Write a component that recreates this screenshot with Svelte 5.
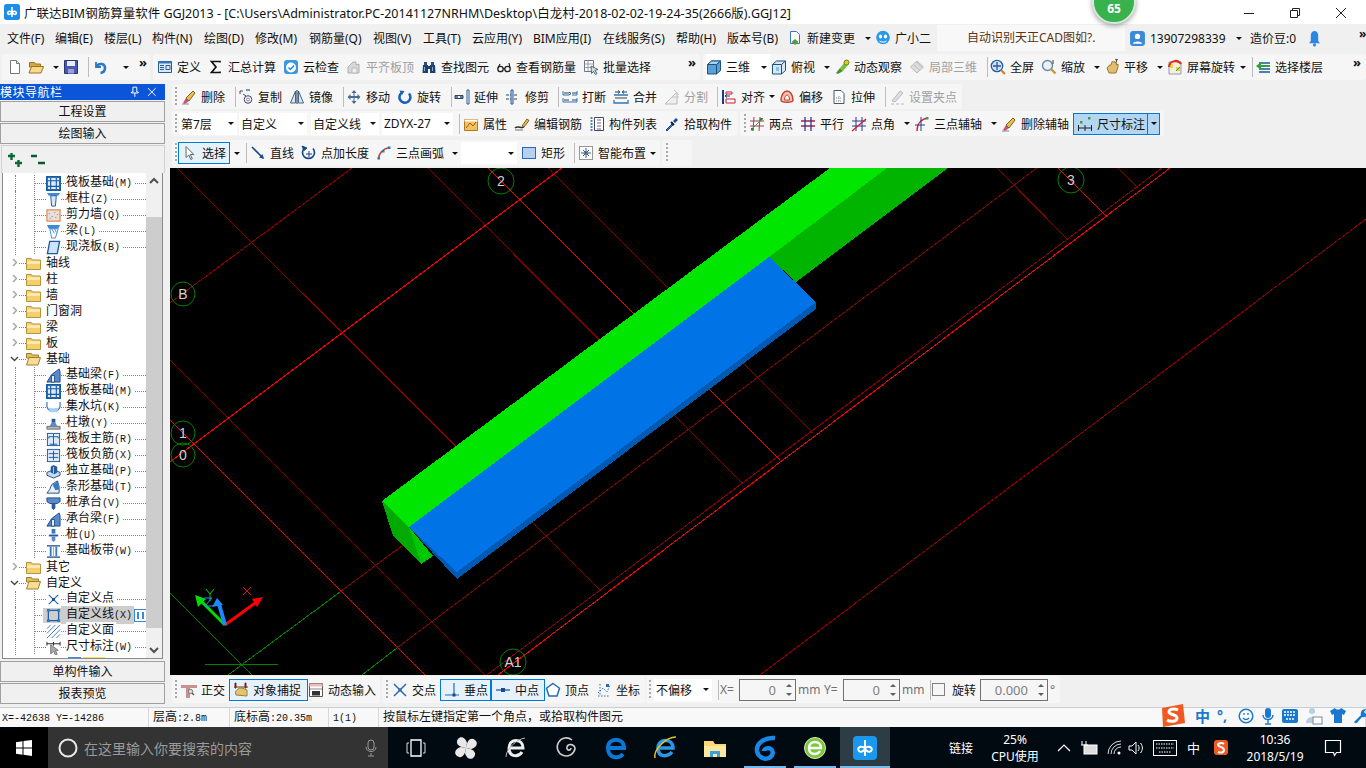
<script>
  const I = {
    doc: `<path d="M3.5 1.5h6l3 3v10h-9z" fill="#fff" stroke="#777"/><path d="M9.5 1.5v3h3" fill="#ddd" stroke="#777"/>`,
    folder: `<path d="M1.5 3.5h5l1 1.5h5v3h-11z" fill="#d8a840" stroke="#9a7420"/><path d="M1 14l2.5-6.5h12L13 14z" fill="#f6d98c" stroke="#9a7420"/>`,
    save: `<path d="M1.5 1.5h13v13h-13z" fill="#4a58b0" stroke="#2a3478"/><path d="M4 2h8v5H4z" fill="#e8ecf8"/><path d="M5 10h6v4.500H5z" fill="#9aa4d8"/>`,
    undo: `<path d="M4 3v5h5" fill="none" stroke="#2a78c8" stroke-width="1.800"/><path d="M4.500 7.500C7 3.500 13 4.500 13 9c0 3-2 4.500-4.500 5" fill="none" stroke="#2a78c8" stroke-width="2.600"/>`,
    def: `<path d="M1.500 2.500h13v11h-13z" fill="#dbe8f6" stroke="#2a5a9a"/><path d="M1.500 2.500h13v2h-13z" fill="#3a78c0"/><path d="M3 6.500h4M3 8.500h4M3 10.500h4M9 6.500h4v4H9z" fill="none" stroke="#2a5a9a"/>`,
    sigma: `<path d="M12 3.500V2.500H3.500L8 8l-4.500 5.500H12v-1" fill="none" stroke="#111" stroke-width="1.700"/>`,
    cloud: `<rect x="1" y="1" width="14" height="14" rx="3" fill="#3a98e0"/><circle cx="8" cy="8.500" r="5" fill="#fff"/><path d="M5.500 8.500l2 2 3.500-4" fill="none" stroke="#2a88d0" stroke-width="1.500"/>`,
    level: `<path d="M2 14V8l5-5h3v3l3-1v9z" fill="#d8d8d8" stroke="#b0b0b0"/><path d="M6 9h5v5H6z" fill="#efefef" stroke="#bbb"/>`,
    binoc: `<path d="M3 3h3v3H3zM10 3h3v3h-3z" fill="#30507c"/><path d="M2 6h5v8H1.500zM9 6h5l.5 8H9zM7 7h2v3H7z" fill="#20406c"/><path d="M3 8h1v4H3zM11 8h1v4h-1z" fill="#8ab0d8"/>`,
    specs: `<circle cx="4.500" cy="10" r="2.700" fill="none" stroke="#222" stroke-width="1.300"/><circle cx="11.500" cy="10" r="2.700" fill="none" stroke="#222" stroke-width="1.300"/><path d="M7 9.500h2M2 9l2-4M14 9l-1-5" fill="none" stroke="#222" stroke-width="1.200"/>`,
    batch: `<path d="M1.500 1.500h9v11h-9z" fill="#fff" stroke="#678"/><path d="M1.500 5h9M1.500 8.500h9M5 1.500v11" stroke="#99a"/><path d="M8 7l7 3.500-3 1 2 3-1.500 1-2-3-2 2z" fill="#cdd" stroke="#567"/>`,
    cube: `<path d="M1.500 5.500l4-3.500h9v9.500l-4 3.500h-9z" fill="#5aa0d8" stroke="#20507c"/><path d="M1.500 5.500h9v9.500M10.500 5.500l4-3.500" fill="none" stroke="#20507c"/><path d="M1.500 5.500l4-3.500h9l-4 3.500z" fill="#a8d4f4" stroke="#20507c"/>`,
    cubeo: `<path d="M1.500 5.500l4-3.500h9v9.500l-4 3.500h-9z" fill="#d4e8f8" stroke="#20507c"/><path d="M1.500 5.500h9v9.500M10.500 5.500l4-3.500" fill="none" stroke="#20507c"/><path d="M5 8h3v4H5z" fill="#8cc0e8"/>`,
    orbit: `<path d="M2 14l4-5 3 3-5 3z" fill="#4a9030"/><path d="M6 9l5-6 3 3-5 6z" fill="#7ac040"/><circle cx="12.500" cy="3.500" r="2.500" fill="#e0d020" stroke="#6a8020"/>`,
    local: `<path d="M1.500 8L8 2l6.500 6L8 14z" fill="#ddd" stroke="#bbb"/><path d="M4.500 5.500l6.500 6M7.500 3l6 6" stroke="#bbb"/>`,
    full: `<circle cx="7" cy="7" r="5.700" fill="#cfe2f6" stroke="#2a5a9a" stroke-width="1.300"/><path d="M7 3v8M3 7h8" stroke="#2a5a9a" stroke-width="1.300"/><path d="M11 11l4 4" stroke="#c08030" stroke-width="2"/>`,
    zoom: `<circle cx="6.500" cy="6.500" r="5" fill="#e8f0f8" stroke="#6a88a8" stroke-width="1.400"/><path d="M10 10l4.500 4.500" stroke="#c09a30" stroke-width="2.400"/><path d="M12 1v4" stroke="#444"/>`,
    pan: `<path d="M3 9l2 5h7l2-6V5l-1.500 1V3.500L11 4V2.500L9.500 3 8 2.500 7 6 5.500 6z" fill="#e2bc70" stroke="#9a7a30"/><path d="M11 1l1.500-1 1.500 1M12.500 0v3" stroke="#456" fill="none"/>`,
    rot: `<path d="M2 3h12v12H2z" fill="#f0f0e0" stroke="#99a"/><path d="M3 5h3v4H3zM9 8h4v4H9z" fill="#e8d050"/><path d="M9 12l4-4" stroke="#40a040"/><path d="M2 8a6.500 6.500 0 0 1 12-3" fill="none" stroke="#e03020" stroke-width="2"/>`,
    floors: `<path d="M4 4h11M4 7h11M4 10h11M4 13h11" stroke="#1a5a9a" stroke-width="1.600"/><path d="M1 7l5-4v3h9v2H6v3z" fill="#30a040"/>`,
    erase: `<path d="M2 14l3-5 3 3-4 3z" fill="#d04a90"/><path d="M5 9l7-7 2 2-6 8z" fill="#e8c050" stroke="#806020"/><path d="M1 15h7" stroke="#888"/>`,
    copy: `<circle cx="10" cy="10.500" r="3.800" fill="none" stroke="#446" /><circle cx="10" cy="10.500" r="1.500" fill="none" stroke="#88a"/><path d="M2 2h3M2 2v3M5 5l3 2" stroke="#446" fill="none"/><path d="M8 1h4" stroke="#3a78c0" stroke-width="1.500"/>`,
    mirror: `<path d="M1.500 14L6.500 2v12zM14.500 14L9.500 2v12z" fill="#dce8f4" stroke="#446688"/><path d="M8 1v14" stroke="#223"/>`,
    move: `<path d="M8 1l2.500 3h-2v3h3V5l3 3-3 3V9h-3v3h2L8 15l-2.500-3h2V9h-3v2l-3-3 3-3v2h3V4h-2z" fill="#4a6a90"/>`,
    rotate: `<path d="M12 4.500A5.500 5.500 0 1 1 5 3.500" fill="none" stroke="#1a60b8" stroke-width="2.600"/><path d="M2.500 1.500l5 .500-2.500 4z" fill="#1a60b8"/>`,
    extend: `<path d="M1 8h3M6 8h3" stroke="#2a5a9a" stroke-width="1.500"/><path d="M1 6.500h8v3H1z" fill="none" stroke="#345"/><path d="M13 1v14h2V1z" fill="#fff" stroke="#2a5a9a"/>`,
    trim: `<path d="M1 6h12M1 10h12" stroke="#345" stroke-dasharray="3 1"/><path d="M6 1v14h2V1z" fill="#cde" stroke="#2a5a9a"/>`,
    break: `<path d="M2 4h5M10 4h5M2 11h5M10 11h5" stroke="#345"/><path d="M1 2v4h6M15 2v4H10M1 9v4h14V9" fill="none" stroke="#2a78c0"/><path d="M7 3l2 1.500L7 6" fill="none" stroke="#345"/>`,
    merge: `<path d="M1 11v3h14v-3M1 6h14" fill="none" stroke="#2a78c0" stroke-width="1.300"/><path d="M2 3h4M10 3h4M5 1.500L7 3 5 4.500M11 1.500L9 3l2 1.500" fill="none" stroke="#345"/><path d="M2 9h12" stroke="#345"/>`,
    split: `<path d="M1 15L13 3v12z" fill="#eee" stroke="#bbb"/><path d="M8 8h7M10 1l5 5" stroke="#c4c4c4"/>`,
    alignl: `<path d="M2 1v14" stroke="#1a3a8a" stroke-width="2"/><path d="M5 3h6v2H5zM5 10h9v4H5z" fill="#fff" stroke="#c02030"/><path d="M9 7H4M6 5.500L4 7l2 1.500" fill="none" stroke="#1a3a8a"/>`,
    offset: `<path d="M2 11c0-5 3-9 6-9s6 4 6 9c0 3-12 3-12 0z" fill="#f4c0b0" stroke="#c04030" stroke-width="1.500"/><path d="M5.500 11c0-3 1.500-5 2.500-5s2.500 2 2.500 5z" fill="#fff" stroke="#c04030"/>`,
    stretch: `<path d="M3 1.500h7l3 3v10H3z" fill="#fff" stroke="#456"/><path d="M5 9h6M5 12h6M8 7v6" stroke="#789" stroke-dasharray="1 1"/>`,
    gripset: `<path d="M3 12L11 2l3 2-8 9z" fill="#ddd" stroke="#bbb"/><path d="M2 15h3M7 15h3M12 15h3" stroke="#bbb"/>`,
    attr: `<path d="M1.500 3.500h13v11h-13z" fill="#f6c060" stroke="#b07820"/><path d="M3 12l4-5 3 3 3-4" fill="none" stroke="#906020"/><path d="M1.500 3.500h13v2h-13z" fill="#fff"/>`,
    edit: `<path d="M1 12c3-3 6 1 9-1" fill="none" stroke="#333" stroke-width="1.500"/><path d="M8 10l5-7 2 1.500L10 11z" fill="#e8c050" stroke="#806020"/><path d="M1 14h8" stroke="#777"/>`,
    list: `<path d="M5.500 1.500h9v13h-9z" fill="#fff" stroke="#446"/><path d="M8 4h4M8 7h4M8 10h4M8 13h4" stroke="#668"/><path d="M1.500 2h2M1.500 5h2M1.500 8h2M1.500 11h2M1.500 14h2" stroke="#268" stroke-width="1.500"/>`,
    pick: `<path d="M2 14l1 1 6-6-1-1z" fill="#4a78c8" stroke="#1a4898"/><path d="M7 6l3 3" stroke="#123" stroke-width="2"/><path d="M9 5l3-3 2 2-3 3z" fill="#1a4898"/>`,
    twopt: `<path d="M1 5h14M1 10h14M5 1l-1 14M11 1l-1 14" stroke="#a04060"/><path d="M2 14L14 2" stroke="#40a040"/><rect x="2" y="12" width="2.500" height="2.500" fill="#308030"/><rect x="11" y="2" width="2.500" height="2.500" fill="#308030"/>`,
    par: `<path d="M1 5h14M1 10h14" stroke="#a02050" stroke-width="1.300"/><path d="M5 1v14M11 1v14" stroke="#2a3a90" stroke-width="1.300"/>`,
    ang: `<path d="M1 5h14M1 10h14M5 1v14M11 1v14" stroke="#2a3a90"/><path d="M1 15L15 3" stroke="#d02030" stroke-width="1.300"/>`,
    arc3: `<path d="M3 15C3 8 7 3 14 2" fill="none" stroke="#d02030" stroke-width="1.400"/><path d="M7 1v14M1 9h10" stroke="#2a3a90"/><rect x="12" y="1" width="2.500" height="2.500" fill="#40a040"/>`,
    dim: `<path d="M1.500 9v6M8 9v6M14.500 9v6M1.500 12h13" stroke="#222"/><rect x="3" y="5" width="2.500" height="2.500" fill="#40a040"/><rect x="11" y="1" width="2.500" height="2.500" fill="#40a040"/>`,
    sel: `<path d="M4 1.500v11l2.800-2.500 2 4.500 1.500-.7-2-4.300h3.500z" fill="#fff" stroke="#666"/>`,
    line: `<path d="M2 2l11 11" stroke="#1a4a8a" stroke-width="1.600"/><path d="M14 14l-5-1.500 3.500-3.500z" fill="#1a4a8a"/>`,
    addlen: `<path d="M3 3.500a6 6 0 1 0 9 0" fill="none" stroke="#1a4a8a" stroke-width="1.700"/><path d="M8 6v6M5 9h6M1 1l5 2-3 2.500z" stroke="#1a4a8a" fill="#1a4a8a"/>`,
    arc: `<path d="M2.500 14C3 8 7 4 13 2.500" fill="none" stroke="#d04030" stroke-width="1.500"/><rect x="1.500" y="12" width="2.500" height="2.500" fill="#2a78c0"/><rect x="6" y="5" width="2.500" height="2.500" fill="#2a78c0"/><rect x="12" y="1.500" width="2.500" height="2.500" fill="#2a78c0"/>`,
    rect: `<rect x="1.500" y="2.500" width="13" height="11" fill="#b8d0f0" stroke="#2a68b8"/>`,
    smart: `<rect x="1.500" y="1.500" width="13" height="13" fill="#fff" stroke="#333" stroke-dasharray="1 1"/><path d="M5 5l6 6M11 5l-6 6M8 3v10M3 8h10" stroke="#456"/><rect x="6.500" y="6.500" width="3" height="3" fill="#2a6ab0"/>`,
    ortho: `<path d="M0 3h16v3H0zM5 6h4v10H5z" fill="#c89090"/><path d="M9 9l4 4" stroke="#555" stroke-width="1.500"/><circle cx="9.500" cy="9.500" r="2.200" fill="#ddd" stroke="#777"/>`,
    snap: `<path d="M2 1h1v5H2zM12 1h1v5h-1zM1 5h14" stroke="#7a3020"/><path d="M3 13c-2-5 3-7 6-7l5 2v6z" fill="#e0c470" stroke="#a08030"/>`,
    dyn: `<path d="M1.500 1.500h13v13h-13z" fill="#fff" stroke="#555"/><path d="M1.500 1.500h13v3h-13z" fill="#ebb"/><path d="M2 7h12" stroke="#888"/><rect x="4" y="9" width="8" height="4.500" fill="#333"/>`,
    cross: `<path d="M2 2l12 12M14 2L2 14" stroke="#2a6ab8" stroke-width="1.500"/><rect x="6.500" y="6.500" width="3" height="3" fill="#2a6ab8"/>`,
    perp: `<path d="M1 13h14M10 1v12" stroke="#2a6ab8" stroke-width="1.200"/><rect x="8.500" y="11.500" width="3" height="3" fill="#1a4a8a"/>`,
    mid: `<path d="M1 8h14" stroke="#2a6ab8" stroke-width="1.400"/><rect x="6" y="6" width="4" height="4" fill="#1a4a8a"/>`,
    vert: `<path d="M8 1.500l6.500 4.700L12 14H4L1.500 6.200z" fill="#fff" stroke="#2a6ab8" stroke-width="1.500"/>`,
    coord: `<path d="M2 14h12M4 2v12M2 11l5-5 4 4 3-7" fill="none" stroke="#2a6ab8" stroke-dasharray="1.500 1.500"/><rect x="10" y="2" width="3" height="3" fill="#2a6ab8"/>`,
    blue: `<rect x="1" y="1" width="14" height="14" rx="3" fill="#3a8ad8"/><circle cx="8" cy="6" r="2.500" fill="#fff"/><path d="M3.500 13c1-3 8-3 9 0z" fill="#fff"/>`,
    bell: `<path d="M8 1c-2 0-3.500 2-3.500 4v5L3 12.500h10L11.500 10V5c0-2-1.500-4-3.500-4z" fill="#2a88e0"/><circle cx="8" cy="14" r="1.500" fill="#2a88e0"/>`,
    pageup: `<path d="M3.500 1.500h6l3 3v9h-9z" fill="#fff" stroke="#3a78c0"/><path d="M8 9l3.500 3L8 15l-3.500-3z" fill="#50a030"/>`,
    mascot: `<circle cx="8" cy="7.500" r="6.800" fill="#2a98e8"/><ellipse cx="5.500" cy="6.500" rx="1.600" ry="2" fill="#fff"/><ellipse cx="10.500" cy="6.500" rx="1.600" ry="2" fill="#fff"/><path d="M4.500 11c2 1.500 5 1.500 7 0" fill="none" stroke="#fff"/>`,
    // tree
    raft: `<rect x="1" y="1" width="14" height="14" fill="#dce9f8" stroke="#1a5aa0" stroke-width="2"/><path d="M5 2v12M11 2v12M2 5h12M2 11h12" stroke="#1a5aa0" stroke-width="1.200"/>`,
    col: `<path d="M1 1h14l-2 3H3z" fill="#3a8ad8"/><path d="M5 4h6l-1 11H6z" fill="#d8e8f8" stroke="#1a5aa0"/>`,
    wall: `<rect x="1" y="2" width="14" height="12" fill="#e8e0d8" stroke="#d07030"/><path d="M3 6h1M6 9h1M9 5h1M4 11h1M10 10h1M12 7h1" stroke="#777"/>`,
    beam: `<path d="M1 1h14l-2 4H3z" fill="#3a8ad8"/><path d="M4 5h9l-3 10H6z" fill="#fff" stroke="#3a8ad8"/><path d="M6 5l3 5M9 5l2 4" stroke="#3a8ad8"/>`,
    slab: `<path d="M4 1.500h10.500L12 14.500H1.500z" fill="#cfe2fa" stroke="#1a5aa0" stroke-width="1.400"/>`,
    fbeam: `<path d="M1 15l5-8 8-6 1 3v11z" fill="#5a8ac8" stroke="#1a4a8a"/><path d="M6 15V8h3v7z" fill="#fff" stroke="#1a4a8a"/>`,
    pit: `<path d="M1 2v5c1 4 3 5 7 5s6-1 7-5V2" fill="none" stroke="#3a7ac0" stroke-width="1.300"/><path d="M3 8c2 1 8 1 10 0l-1 5H4z" fill="#a8cff0"/>`,
    pier: `<path d="M1 11h14v3H1z" fill="#b8b8b8" stroke="#666"/><path d="M4 11l2-4h4l2 4z" fill="#5a8ac8"/><path d="M6 7V3h4v4z" fill="#2a5a9a"/>`,
    rmain: `<rect x="1.500" y="1.500" width="13" height="13" fill="#dce9f8" stroke="#1a5aa0"/><path d="M3 5h10M3 5v2M13 5v2M8 2v12M4 13h8" stroke="#1a5aa0"/>`,
    rneg: `<rect x="1.500" y="1.500" width="13" height="13" fill="#dce9f8" stroke="#1a5aa0"/><path d="M3 6h10M3 10h10M8 3v10" stroke="#1a5aa0"/>`,
    iso: `<path d="M1 9l7-3 7 3v3l-7 3-7-3z" fill="#c8dcf0" stroke="#1a4a8a"/><path d="M5 3l3-2 4 2v6l-3 2-4-2z" fill="#2a5a9a"/><path d="M8 3v7" stroke="#a8cff0"/>`,
    strip: `<path d="M1 14l3-4 2-5 6-4 2 6v7z" fill="#e8f0f8" stroke="#1a4a8a"/><path d="M7 5l6-4 1 9-4 1z" fill="#3a78c0"/>`,
    cap: `<path d="M1 2h14v4l-3 2H4L1 6z" fill="#5a8ac8" stroke="#1a4a8a"/><path d="M6 8h4v5l-2 2-2-2z" fill="#2a5a9a"/>`,
    cpile: `<path d="M6 1h4v5H6z" fill="#3a78c0"/><path d="M3 7h10v2H3z" fill="#2a5a9a"/><path d="M6 9h4v4l-2 2-2-2z" fill="#5a8ac8"/>`,
    bandg: `<path d="M1 2h14M1 14h14" stroke="#1a4a8a" stroke-width="1.500"/><path d="M5 3v10M11 3v10" stroke="#3a78c0" stroke-width="2"/><path d="M8 3v10" stroke="#8ab0d8"/>`,
    cpt: `<path d="M3 3l10 10M13 3L3 13" stroke="#2a6ab8" stroke-width="1.300"/><rect x="6.500" y="6.500" width="3" height="3" fill="#1a4a8a"/>`,
    cline: `<rect x="2.500" y="2.500" width="11" height="11" fill="none" stroke="#1a5aa0" stroke-width="1.300"/><path d="M1 1h3v3H1zM12 1h3v3h-3zM1 12h3v3H1zM12 12h3v3h-3z" fill="#2a78d0"/>`,
    cface: `<path d="M1 5l4-4M1 10l9-9M1 15L15 1M6 15l9-9M11 15l4-4" stroke="#3a78c0"/>`,
    cdim: `<path d="M1 2v4M8 2v4M15 2v4M1 4h14" stroke="#222"/><path d="M5 5v10l3-3 2 4 2-1-2-4h3z" fill="#aaa" stroke="#777"/>`
  }

  const lay = (items, end) => items.map((it, i) => ({ ...it, w: (i + 1 < items.length ? items[i + 1].x : end) - it.x }))
  const t = (x, i, l, o = {}) => ({ k: 't', x, i, l, ...o })
  const c = (x, o = {}) => ({ k: 'c', x, ...o })
  const s = (x) => ({ k: 's', x })
  const g = (x) => ({ k: 'g', x })
  const m = (x) => ({ k: 'm', x })
  const b = (x, l, o = {}) => ({ k: 'b', x, l, ...o })
  const tx = (x, l, o = {}) => ({ k: 'x', x, l, ...o })
  const num = (x, v) => ({ k: 'n', x, v })
  const blank = (x) => ({ k: 'e', x })

  function band(from, to, items) {
    return { from, to, items: lay(items, to) }
  }

  function row(start, bands) {
    let prev = start
    return bands.map((bd) => {
      const ml = bd.from - prev
      prev = bd.to
      return { ...bd, ml }
    })
  }

  const menus = lay([
    tx(7, '文件(F)'), tx(55, '编辑(E)'), tx(104, '楼层(L)'), tx(152, '构件(N)'), tx(204, '绘图(D)'),
    tx(255, '修改(M)'), tx(309, '钢筋量(Q)'), tx(373, '视图(V)'), tx(423, '工具(T)'), tx(472, '云应用(Y)'),
    tx(533, 'BIM应用(I)'), tx(603, '在线服务(S)'), tx(676, '帮助(H)'), tx(727, '版本号(B)'),
    t(787, 'pageup', '新建变更'), c(860), t(875, 'mascot', '广小二')
  ], 937)

  const rowTop = row(0, [
    band(2, 150, [t(7, 'doc', ''), t(28, 'folder', ''), c(48), t(63, 'save', ''), s(84), t(92, 'undo', ''), c(112), m(139)]),
    band(153, 700, [t(157, 'def', '定义'), t(208, 'sigma', '汇总计算'), t(283, 'cloud', '云检查'), t(346, 'level', '平齐板顶', { off: true }), t(421, 'binoc', '查找图元'), t(496, 'specs', '查看钢筋量'), t(583, 'batch', '批量选择'), m(688)]),
    band(703, 1366, [blank(703), t(706, 'cube', '三维', { white: true }), c(756, { white: true }), t(771, 'cubeo', '俯视'), c(820), t(834, 'orbit', '动态观察'), t(909, 'local', '局部三维', { off: true }), s(984), t(990, 'full', '全屏'), t(1041, 'zoom', '缩放'), c(1089), t(1104, 'pan', '平移'), c(1153), t(1167, 'rot', '屏幕旋转'), c(1235), s(1250), t(1255, 'floors', '选择楼层'), m(1353)])
  ])

  const row3 = row(170, [band(172, 962, [
    g(174), t(181, 'erase', '删除'), s(232), t(238, 'copy', '复制'), t(289, 'mirror', '镜像'), s(340), t(346, 'move', '移动'), t(397, 'rotate', '旋转'), s(448),
    t(454, 'extend', '延伸'), t(505, 'trim', '修剪'), s(555), t(562, 'break', '打断'), t(613, 'merge', '合并'), t(664, 'split', '分割', { off: true }), s(714),
    t(721, 'alignl', '对齐'), c(765), t(779, 'offset', '偏移'), t(831, 'stretch', '拉伸'), s(882), t(889, 'gripset', '设置夹点', { off: true })
  ])])

  const row4 = row(170, [
    band(172, 738, [g(174), b(179, '第7层', { bw: 58 }), b(239, '自定义', { bw: 68 }), b(311, '自定义线', { bw: 68 }), b(382, 'ZDYX-27', { bw: 71 }), s(456), t(463, 'attr', '属性'), t(514, 'edit', '编辑钢筋'), t(589, 'list', '构件列表'), t(664, 'pick', '拾取构件')]),
    band(740, 1164, [g(743), t(749, 'twopt', '两点'), t(800, 'par', '平行'), t(851, 'ang', '点角'), c(899), t(914, 'arc3', '三点辅轴'), c(986), t(1001, 'erase', '删除辅轴'), t(1073, 'dim', '尺寸标注', { on: 'hard', pl: 3 }), c(1148, { on: 'hard' }), blank(1160)])
  ])

  const row5 = row(170, [
    band(172, 660, [g(174), t(178, 'sel', '选择', { on: 'soft', pl: 3 }), c(230), s(243), t(250, 'line', '直线'), t(301, 'addlen', '点加长度'), t(376, 'arc', '三点画弧'), c(448), b(461, '', { bw: 56 }), t(521, 'rect', '矩形'), s(571), t(578, 'smart', '智能布置'), c(646)]),
    band(662, 692, [g(665)])
  ])

  const rowBottom = row(170, [
    band(172, 380, [g(174), t(181, 'ortho', '正交'), t(229, 'snap', '对象捕捉', { on: 'soft', pl: 3 }), t(308, 'dyn', '动态输入')]),
    band(382, 645, [g(385), t(392, 'cross', '交点'), t(440, 'perp', '垂点', { on: 'soft', pl: 3 }), t(491, 'mid', '中点', { on: 'soft', pl: 3 }), t(545, 'vert', '顶点'), t(596, 'coord', '坐标')]),
    band(646, 1060, [g(648), b(654, '不偏移', { bw: 58 }), s(716), tx(720, 'X=', { gr: true }), num(739, '0'), tx(798, 'mm', { gr: true }), tx(824, 'Y=', { gr: true }), num(843, '0'), tx(902, 'mm', { gr: true }), s(928), { k: 'k', x: 932 }, tx(952, '旋转'), num(980, '0.000'), tx(1050, '°', { gr: true })])
  ])

  const tree = [
    { n: '筏板基础', c: '(M)', i: 'raft', child: 1 },
    { n: '框柱', c: '(Z)', i: 'col', child: 1 },
    { n: '剪力墙', c: '(Q)', i: 'wall', child: 1 },
    { n: '梁', c: '(L)', i: 'beam', child: 1 },
    { n: '现浇板', c: '(B)', i: 'slab', child: 1 },
    { n: '轴线', f: 'closed' }, { n: '柱', f: 'closed' }, { n: '墙', f: 'closed' }, { n: '门窗洞', f: 'closed' }, { n: '梁', f: 'closed' }, { n: '板', f: 'closed' },
    { n: '基础', f: 'open' },
    { n: '基础梁', c: '(F)', i: 'fbeam', child: 1 },
    { n: '筏板基础', c: '(M)', i: 'raft', child: 1 },
    { n: '集水坑', c: '(K)', i: 'pit', child: 1 },
    { n: '柱墩', c: '(Y)', i: 'pier', child: 1 },
    { n: '筏板主筋', c: '(R)', i: 'rmain', child: 1 },
    { n: '筏板负筋', c: '(X)', i: 'rneg', child: 1 },
    { n: '独立基础', c: '(P)', i: 'iso', child: 1 },
    { n: '条形基础', c: '(T)', i: 'strip', child: 1 },
    { n: '桩承台', c: '(V)', i: 'cap', child: 1 },
    { n: '承台梁', c: '(F)', i: 'fbeam', child: 1 },
    { n: '桩', c: '(U)', i: 'cpile', child: 1 },
    { n: '基础板带', c: '(W)', i: 'bandg', child: 1 },
    { n: '其它', f: 'closed', trunk: 1 },
    { n: '自定义', f: 'open', trunk: 1 },
    { n: '自定义点', c: '', i: 'cpt', child: 1 },
    { n: '自定义线', c: '(X)', i: 'cline', child: 1, cur: 1 },
    { n: '自定义面', c: '', i: 'cface', child: 1 },
    { n: '尺寸标注', c: '(W)', i: 'cdim', child: 1 }
  ]

  const redBright = [
    [170, 462, 562, 168], [498, 675, 1170, 168], [170, 420, 425, 675], [488, 168, 780, 460], [1058, 168, 1107, 217]
  ]
  const redDark = [
    [170, 303, 352, 168], [340, 592, 909, 168], [397, 648, 1037, 168], [487, 675, 1162, 168], [760, 675, 1366, 219],
    [177, 168, 601, 591], [428, 168, 743, 484], [548, 168, 813, 433], [997, 168, 1068, 240], [1118, 168, 1138, 188], [170, 360, 487, 677]
  ]
  const greenLines = [[228, 675, 340, 592], [362, 675, 397, 648], [170, 593, 252, 675], [205, 664, 265, 664], [265, 664, 278, 665]]
  const bubbles = [
    { x: 501, y: 181, r: 13, l: '2' }, { x: 183, y: 294, r: 12, l: 'B' }, { x: 183, y: 433, r: 12, l: '1' },
    { x: 183, y: 455, r: 12, l: '0' }, { x: 1071, y: 180, r: 13, l: '3' }, { x: 513, y: 662, r: 13, l: 'A1' }
  ]

  const tasks = [
    { k: 'view' }, { k: 'fan' }, { k: 'ie' }, { k: 'swirl' }, { k: 'edge' }, { k: 'iey' }, { k: 'files' },
    { k: 'g', run: 1 }, { k: 'ge', run: 1 }, { k: 'app', active: 1 }
  ]
</script>

{#snippet icon(name, size = 16)}
  <svg class="ico" width={size} height={size} viewBox="0 0 16 16">{@html I[name]}</svg>
{/snippet}

{#snippet items(list)}
  {#each list as it}
    {#if it.k === 't'}
      <div class="tool" class:off={it.off} class:white={it.white} class:soft={it.on === 'soft'} class:hard={it.on === 'hard'} style="width:{it.w}px;padding-left:{it.pl || 0}px">
        {@render icon(it.i)}
        {#if it.l}<span>{it.l}</span>{/if}
      </div>
    {:else if it.k === 'c'}
      <div class="caretbox" class:white={it.white} class:hard={it.on === 'hard'} style="width:{it.w}px"><i class="caret"></i></div>
    {:else if it.k === 's'}
      <div class="sepbox" style="width:{it.w}px"><i></i></div>
    {:else if it.k === 'g'}
      <div class="gripbox" style="width:{it.w}px"><i></i></div>
    {:else if it.k === 'm'}
      <div class="more" style="width:{it.w}px">»</div>
    {:else if it.k === 'b'}
      <div class="cellwrap" style="width:{it.w}px">
        <div class="combo" style="width:{it.bw}px"><span>{it.l}</span><i class="caret"></i></div>
      </div>
    {:else if it.k === 'x'}
      <div class="plain" class:gr={it.gr} style="width:{it.w}px">{it.l}</div>
    {:else if it.k === 'n'}
      <div class="cellwrap" style="width:{it.w}px">
        <div class="spin"><span>{it.v}</span><div class="arrows"><i class="up"></i><i class="dn"></i></div></div>
      </div>
    {:else if it.k === 'k'}
      <div class="cellwrap" style="width:{it.w}px"><div class="check"></div></div>
    {:else}
      <div style="width:{it.w}px"></div>
    {/if}
  {/each}
{/snippet}

{#snippet bands(list)}
  {#each list as bd}
    <div class="band" style="margin-left:{bd.ml}px;width:{bd.to - bd.from}px;padding-left:{bd.items[0].x - bd.from}px">
      {@render items(bd.items)}
    </div>
  {/each}
{/snippet}

<div class="screen">
  <div class="title">
    <svg class="logo" width="16" height="16" viewBox="0 0 16 16"><rect width="16" height="16" rx="2.500" fill="#1a8ee8"/><path d="M8 3v10M8 8c-4-2-5 1-4 2s3 0 4-2c4-2 5 1 4 2s-3 0-4-2" fill="none" stroke="#fff" stroke-width="1.600"/></svg>
    <span class="caption">广联达BIM钢筋算量软件 GGJ2013 - [C:\Users\Administrator.PC-20141127NRHM\Desktop\白龙村-2018-02-02-19-24-35(2666版).GGJ12]</span>
    <div class="winbtns">
      <svg width="12" height="12" viewBox="0 0 12 12"><path d="M1 6.500h10" stroke="#222"/></svg>
      <svg width="12" height="12" viewBox="0 0 12 12"><path d="M1.500 3.500h7v7h-7zM3.500 3.500v-2h7v7h-2" fill="none" stroke="#222"/></svg>
      <svg width="12" height="12" viewBox="0 0 12 12"><path d="M1 1l10 10M11 1L1 11" stroke="#222"/></svg>
    </div>
    <div class="badge"><span>65</span></div>
  </div>

  <div class="menubar">
    {@render items(menus)}
    <div class="notice">自动识别天正CAD图如?.</div>
    <div class="account">
      {@render icon('blue', 17)}
      <span class="phone">13907298339</span>
      <i class="caret"></i>
      <span class="bean">造价豆:0</span>
      {@render icon('bell', 17)}
      <span class="more2">»</span>
    </div>
  </div>

  <div class="row top">{@render bands(rowTop)}</div>

  <div class="work">
    <aside class="side">
      <div class="sidehead">
        <span>模块导航栏</span>
        <svg width="10" height="12" viewBox="0 0 10 12"><path d="M3 1h4v5h1.500v1h-7V6H3zM5 7v4" fill="none" stroke="#fff"/></svg>
        <svg width="10" height="10" viewBox="0 0 10 10"><path d="M1 1l8 8M9 1L1 9" stroke="#fff"/></svg>
      </div>
      <div class="sidebtn">工程设置</div>
      <div class="sidebtn">绘图输入</div>
      <div class="treetools">
        <svg width="16" height="16" viewBox="0 0 16 16"><path d="M1 4h7M4.500 1v7M8 11h7M11.500 8v7" stroke="#0a6a30" stroke-width="2.400"/></svg>
        <svg width="16" height="16" viewBox="0 0 16 16"><path d="M1 4h6M8 11h7" stroke="#0a5a30" stroke-width="2.400"/></svg>
      </div>
      <div class="treeframe">
        <div class="treerows">
          {#each tree as r}
            {#if r.f}
              <div class="node folderrow">
                <svg class="chev" width="9" height="9" viewBox="0 0 9 9">
                  {#if r.f === 'closed'}<path d="M3 1l3.500 3.500L3 8" fill="none" stroke="#a0a0a0" stroke-width="1.400"/>
                  {:else}<path d="M1 3l3.500 3.500L8 3" fill="none" stroke="#444" stroke-width="1.400"/>{/if}
                </svg>
                <svg class="fold" width="15" height="14" viewBox="0 0 15 14">
                  {#if r.f === 'closed'}<path d="M.5 2.500h5l1 1.500h8v9.500H.5z" fill="#f4cf6c" stroke="#b89240"/><path d="M1 5h13v3H1z" fill="#fbe9b0"/>
                  {:else}<path d="M.5 1.500h5l1 1.500h6v3h-12z" fill="#e4bc60" stroke="#a08030"/><path d="M.5 13L3 5.500h11.500L12 13z" fill="#f9dc94" stroke="#a08030"/>{/if}
                </svg>
                <span class="nm">{r.n}</span>
              </div>
            {:else}
              <div class="node leaf" class:cur={r.cur}>
                {@render icon(r.i, 15)}
                <span class="nm">{r.n}<em>{r.c}</em></span>
                {#if r.cur}
                  <svg class="mini" width="13" height="13" viewBox="0 0 13 13"><rect x=".5" y=".5" width="12" height="12" fill="#fff" stroke="#3a88d8"/><path d="M3 3h2v7H3zM8 3h2v7H8z" fill="#3a88d8"/></svg>
                {/if}
              </div>
            {/if}
          {/each}
          <div class="node folderrow">
            <svg class="fold" width="15" height="14" viewBox="0 0 15 14"><path d="M.5 2.500h5l1 1.500h8v9.500H.5z" fill="#f4cf6c" stroke="#b89240"/></svg>
            <svg class="mini" width="13" height="13" viewBox="0 0 13 13"><rect x=".5" y=".5" width="12" height="12" fill="#fff" stroke="#3a88d8"/></svg>
            <span class="newtag"></span>
          </div>
        </div>
        <div class="scroll">
          <svg width="16" height="16" viewBox="0 0 16 16"><path d="M4 10l4-4 4 4" fill="none" stroke="#505050" stroke-width="2"/></svg>
          <div class="thumbtrack"><div class="thumb"></div></div>
          <svg width="16" height="16" viewBox="0 0 16 16"><path d="M4 6l4 4 4-4" fill="none" stroke="#505050" stroke-width="2"/></svg>
        </div>
      </div>
      <div class="sidebtn low">单构件输入</div>
      <div class="sidebtn">报表预览</div>
    </aside>

    <div class="center">
      <div class="row r3">{@render bands(row3)}</div>
      <div class="row r4">{@render bands(row4)}</div>
      <div class="row r5">{@render bands(row5)}</div>

      <svg class="canvas" width="1196" height="507" viewBox="170 168 1196 507">
        <g shape-rendering="crispEdges" fill="none">
          {#each redDark as l}<line x1={l[0]} y1={l[1]} x2={l[2]} y2={l[3]} stroke="#8c0000" />{/each}
          {#each redBright as l}<line x1={l[0]} y1={l[1]} x2={l[2]} y2={l[3]} stroke="#ff0000" />{/each}
          {#each greenLines as l}<line x1={l[0]} y1={l[1]} x2={l[2]} y2={l[3]} stroke="#008000" />{/each}
        </g>
        <g shape-rendering="crispEdges">
          <polygon points="382,501 393,536 421,564 409,527" fill="#00aa00" />
          <polygon points="409,527 421,564 433,556" fill="#00c800" />
          <polygon points="382,501 830,168 887,168 769,257 409,527" fill="#00e600" />
          <polygon points="887,168 948,168 796,282 769,257" fill="#00b400" />
          <polygon points="409,527 457,572 816,302 816,309 457,579 432,552" fill="#0059b3" />
          <polygon points="769,257 816,302 457,572 409,527" fill="#0073e6" />
        </g>
        {#each bubbles as o}
          <circle cx={o.x} cy={o.y} r={o.r} fill="none" stroke="#008000" />
          <text x={o.x} y={o.y + 5} text-anchor="middle" class="bubble">{o.l}</text>
        {/each}
        <g>
          <path d="M225 625L258 601" stroke="#ff0000" stroke-width="3" />
          <path d="M263 597l-11 2 5 8z" fill="#ff0000" />
          <path d="M225 625L202 602" stroke="#00dd00" stroke-width="3" />
          <path d="M195 595l3 12 8-8z" fill="#00dd00" />
          <path d="M225 625L219 604" stroke="#1e88ff" stroke-width="4" />
          <path d="M217 598l-5 9 11-2z" fill="#1e88ff" />
          <path d="M206 589l4 5 4-5M210 594v7" fill="none" stroke="#00cc00" />
          <path d="M204 598h8l-7 8h8" fill="none" stroke="#1e88ff" />
          <path d="M243 587l8 8M251 587l-8 8" stroke="#e01010" />
        </g>
      </svg>

      <div class="row rb">{@render bands(rowBottom)}</div>
    </div>
  </div>

  <div class="status">
    <div class="cell s1"><em>X=-42638 Y=-14286</em></div>
    <div class="cell s2">层高<em>:2.8m</em></div>
    <div class="cell s3">底标高<em>:20.35m</em></div>
    <div class="cell s4"><em>1(1)</em></div>
    <div class="cell s5">按鼠标左键指定第一个角点，或拾取构件图元</div>
  </div>

  <div class="ime">
    <svg width="26" height="25" viewBox="0 0 26 25"><path d="M2 5l21-4 2 19-22 4z" fill="#f05a22"/><path d="M18 7c-4-2-9-1-9 2s8 2 8 6-7 4-10 2" fill="none" stroke="#fff" stroke-width="3"/></svg>
    <b class="imezh">中</b>
    <b class="imedot">°,</b>
    <svg width="16" height="16" viewBox="0 0 16 16"><circle cx="8" cy="8" r="6.800" fill="#fff" stroke="#1a78d0" stroke-width="1.500"/><path d="M6 5v2M10 5v2M5 10c1.500 2 4.500 2 6 0" fill="none" stroke="#1a78d0" stroke-width="1.300"/></svg>
    <svg width="14" height="18" viewBox="0 0 14 18"><rect x="4" y="1" width="6" height="10" rx="3" fill="#1a78d0"/><path d="M2 8c0 6 10 6 10 0M7 13v3M4 17h6" fill="none" stroke="#1a78d0" stroke-width="1.400"/></svg>
    <svg width="16" height="14" viewBox="0 0 16 14"><rect width="16" height="14" rx="2" fill="#1a78d0"/><path d="M2 3h12M2 6h12M4 10h8" stroke="#fff" stroke-dasharray="2 1" stroke-width="1.400"/></svg>
    <svg width="18" height="18" viewBox="0 0 18 18"><circle cx="7" cy="4" r="3" fill="#b8cde0"/><path d="M1 16c0-8 12-8 12 0z" fill="#b8cde0"/><rect x="8" y="10" width="9" height="7" fill="#fff" stroke="#789"/></svg>
    <svg width="16" height="15" viewBox="0 0 16 15"><path d="M5 0L0 3l2 4 2-1v9h8V6l2 1 2-4-5-3c-1 2-5 2-6 0z" fill="#1a78d0"/></svg>
    <svg width="15" height="15" viewBox="0 0 15 15"><path d="M1 14l7-7c-1-3 1-6 5-6l-2 3 2 2 2-2c0 4-3 6-6 5l-6 7z" fill="#1a78d0"/></svg>
  </div>

  <footer class="taskbar">
    <div class="start">
      <svg width="16" height="16" viewBox="0 0 16 16"><path d="M0 2.300l6.500-1v6.200H0zM7.500 1.100L16 0v7.500H7.500zM0 8.500h6.500v6.200l-6.500-1zM7.500 8.500H16V16l-8.500-1.200z" fill="#fff"/></svg>
    </div>
    <div class="search">
      <svg width="20" height="20" viewBox="0 0 20 20"><circle cx="10" cy="10" r="8.500" fill="none" stroke="#e8e8e8" stroke-width="2"/></svg>
      <span>在这里输入你要搜索的内容</span>
      <svg class="smic" width="12" height="18" viewBox="0 0 12 18"><rect x="3" y="1" width="6" height="10" rx="3" fill="none" stroke="#999"/><path d="M1 8c0 6 10 6 10 0M6 14v3M3 17h6" fill="none" stroke="#999"/></svg>
    </div>
    <div class="apps">
      {#each tasks as a}
        <div class="app" class:run={a.run} class:active={a.active}>
          <svg width="26" height="26" viewBox="0 0 26 26">
            {#if a.k === 'view'}
              <path d="M8 5h10v16H8z" fill="none" stroke="#fff" stroke-width="1.300"/><path d="M6 8H4v10h2M20 8h2v10h-2" fill="none" stroke="#ddd"/>
            {:else if a.k === 'fan'}
              <g fill="#e8e8e8"><path d="M13 13C5 12 2 8 5 4s8-1 9 4z"/><path d="M13 13c1-8 5-11 9-8s1 8-4 9z"/><path d="M13 13c8 1 11 5 8 9s-8 1-9-4z"/><path d="M13 13c-1 8-5 11-9 8s-1-8 4-9z"/></g>
            {:else if a.k === 'ie'}
              <path d="M6 13h14c0-10-14-10-14 0s10 9 13 4" fill="none" stroke="#eee" stroke-width="3"/><path d="M3 22C3 14 14 4 22 3" fill="none" stroke="#bbb"/>
            {:else if a.k === 'swirl'}
              <path d="M19 5a9 9 0 1 0 3 9c0-5-7-6-8-2s4 4 4 1" fill="none" stroke="#ccc" stroke-width="1.600"/>
            {:else if a.k === 'edge'}
              <path d="M5 13h16c0-11-16-11-16 0s11 11 15 6" fill="none" stroke="#0a78d8" stroke-width="4"/>
            {:else if a.k === 'iey'}
              <path d="M6 13h15c0-10-15-10-15 0s10 9 14 4" fill="none" stroke="#2a98e8" stroke-width="3.500"/><path d="M3 23C1 15 14 2 24 2" fill="none" stroke="#f0c020" stroke-width="1.500"/>
            {:else if a.k === 'files'}
              <path d="M2 6h9l2 3h11v13H2z" fill="#f8d878"/><path d="M2 11h22v11H2z" fill="#fce6a0"/><path d="M8 16h10v6h-3v-3h-4v3H8z" fill="#3aa0d8"/>
            {:else if a.k === 'g'}
              <path d="M23 3C12 2 4 9 5 16c1 6 7 9 12 7 4-2 5-7 2-9s-7 0-7 2" fill="none" stroke="#1a88e8" stroke-width="4.500"/>
            {:else if a.k === 'ge'}
              <circle cx="13" cy="13" r="10.500" fill="#78c838" stroke="#d8f0b8"/><path d="M7 13h12c0-8-12-8-12 0s9 7 11 3" fill="none" stroke="#fff" stroke-width="2.400"/>
            {:else}
              <rect x="1" y="1" width="24" height="24" rx="4" fill="#1a98ee"/><path d="M13 5v16M13 13c-6-3-8 1-6 3s5 0 6-3c6-3 8 1 6 3s-5 0-6-3" fill="none" stroke="#fff" stroke-width="2"/>
            {/if}
          </svg>
        </div>
      {/each}
    </div>
    <div class="tray">
      <span class="link">链接</span>
      <div class="cpu"><span>25%</span><span>CPU使用</span></div>
      <svg class="tup" width="14" height="9" viewBox="0 0 14 9"><path d="M1 8l6-6 6 6" fill="none" stroke="#fff" stroke-width="1.200"/></svg>
      <svg class="tbat" width="18" height="18" viewBox="0 0 18 18"><rect x="3" y="6" width="13" height="9" fill="#ddd" stroke="#fff"/><path d="M1 2v4M5 2v4M0 6h7" stroke="#fff"/></svg>
      <svg class="twifi" width="17" height="17" viewBox="0 0 17 17"><path d="M2 15a13 13 0 0 1 13-13M5 15a10 10 0 0 1 10-10M8 15a7 7 0 0 1 7-7" fill="none" stroke="#ddd"/><circle cx="13" cy="14" r="1.500" fill="#fff"/></svg>
      <svg class="tvol" width="16" height="16" viewBox="0 0 16 16"><path d="M1 6h3l4-4v12l-4-4H1z" fill="none" stroke="#fff"/><path d="M10 5c1.500 2 1.500 4 0 6M12.500 3c2.500 3 2.500 7 0 10" fill="none" stroke="#fff"/></svg>
      <svg class="tkey" width="24" height="16" viewBox="0 0 24 16"><rect x=".5" y=".5" width="23" height="15" fill="none" stroke="#fff"/><path d="M3 4h18M3 8h18M6 12h12" stroke="#fff" stroke-dasharray="1.500 1"/></svg>
      <span class="tzh">中</span>
      <svg class="ts" width="16" height="17" viewBox="0 0 16 17"><rect x="1" y="1" width="14" height="15" rx="3" fill="#f05a22"/><path d="M11 5c-2-1.500-6-1-6 1s6 2 6 5-4 3-6 2" fill="none" stroke="#fff" stroke-width="2"/></svg>
      <div class="clock"><span>10:36</span><span>2018/5/19</span></div>
      <svg class="tnote" width="18" height="18" viewBox="0 0 18 18"><path d="M1.500 1.500h15v12h-4l-2 3-1-3h-8z" fill="none" stroke="#fff" stroke-width="1.200"/></svg>
    </div>
  </footer>
</div>

<style>
  :global(body) {
    margin: 0;
    background: #f0f0f0;
  }

  .screen {
    width: 1366px;
    height: 768px;
    position: relative;
    overflow: hidden;
    background: #f0f0f0;
    font-family: "Noto Sans", "Noto Sans CJK SC", sans-serif;
    font-size: 12px;
    color: #111;
    display: flex;
    flex-direction: column;
  }

  .ico {
    flex: none;
    display: block;
  }

  /* title bar */
  .title {
    height: 24px;
    background: #fff;
    display: flex;
    align-items: center;
    position: relative;
    flex: none;
  }

  .logo {
    margin-left: 4px;
    margin-right: 4px;
  }

  .caption {
    font-size: 12.5px;
    white-space: nowrap;
  }

  .winbtns {
    position: absolute;
    left: 1243px;
    top: 7px;
    display: flex;
    gap: 34px;
  }

  .badge {
    position: absolute;
    left: 1092px;
    top: -20px;
    width: 44px;
    height: 44px;
    border-radius: 50%;
    background: #37b24d;
    border: 2px solid #d8e8dc;
    box-sizing: border-box;
    box-shadow: 0 2px 5px rgba(0, 0, 0, 0.35);
    color: #fff;
    font-weight: 700;
    font-size: 12px;
    display: flex;
    align-items: flex-end;
    justify-content: center;
    padding-bottom: 5px;
  }

  /* menu */
  .menubar {
    height: 28px;
    flex: none;
    display: flex;
    align-items: center;
    padding-left: 7px;
    white-space: nowrap;
  }

  .notice {
    width: 188px;
    height: 26px;
    box-sizing: border-box;
    background: #f8f8f8;
    color: #5a3410;
    line-height: 26px;
    padding-left: 30px;
    flex: none;
  }

  .account {
    display: flex;
    align-items: center;
    margin-left: 4px;
  }

  .phone {
    margin-left: 4px;
    width: 80px;
  }

  .bean {
    margin-left: 8px;
    width: 56px;
  }

  .more2 {
    margin-left: 36px;
    font-weight: 700;
    margin-top: -10px;
  }

  /* toolbars */
  .row {
    display: flex;
    flex: none;
  }

  .top {
    height: 30px;
    padding-top: 2px;
    box-sizing: border-box;
  }

  .top .band {
    height: 26px;
  }

  .r3 {
    height: 25px;
    margin-top: 2px;
  }

  .r4 {
    height: 25px;
    margin-top: 2px;
  }

  .r5 {
    height: 26px;
    margin-top: 4px;
    margin-bottom: 2px;
  }

  .rb {
    height: 32px;
    padding-top: 1px;
    box-sizing: border-box;
  }

  .rb .band {
    height: 27px;
  }

  .band {
    box-sizing: border-box;
    display: flex;
    align-items: center;
    background: #f6f6f6;
    border-radius: 3px;
    white-space: nowrap;
    flex: none;
  }

  .tool {
    display: flex;
    align-items: center;
    gap: 4px;
    height: 22px;
    box-sizing: border-box;
    flex: none;
  }

  .tool.off {
    color: #a0a0a0;
  }

  .tool.white,
  .caretbox.white {
    background: #fff;
    height: 26px;
  }

  .tool.soft {
    background: #e5f1fb;
    border: 1px solid #0078d7;
  }

  .tool.hard {
    background: #b3d7f3;
    border: 1px solid #0078d7;
  }

  .caretbox {
    display: flex;
    align-items: center;
    justify-content: center;
    height: 22px;
    box-sizing: border-box;
    flex: none;
  }

  .caretbox.hard {
    background: #b3d7f3;
    border: 1px solid #0078d7;
    border-left: 0;
  }

  .caret {
    display: inline-block;
    width: 0;
    height: 0;
    border-left: 3px solid transparent;
    border-right: 3px solid transparent;
    border-top: 3px solid #111;
  }

  .account .caret {
    margin-left: 6px;
  }

  .sepbox,
  .gripbox {
    display: flex;
    justify-content: center;
    flex: none;
    height: 20px;
  }

  .sepbox i {
    width: 1px;
    height: 100%;
    background: #bcbcbc;
  }

  .gripbox {
    justify-content: flex-start;
    padding-left: 1px;
    box-sizing: border-box;
  }

  .gripbox i {
    width: 2px;
    height: 100%;
    background: repeating-linear-gradient(#a8a8a8 0 2px, transparent 2px 4px);
  }

  .more {
    font-weight: 700;
    font-size: 13px;
    align-self: flex-start;
    line-height: 16px;
    flex: none;
  }

  .plain {
    flex: none;
  }

  .plain.gr {
    color: #707070;
  }

  .cellwrap {
    flex: none;
  }

  .combo {
    height: 22px;
    background: #fff;
    display: flex;
    align-items: center;
    justify-content: space-between;
    padding: 0 2px;
    box-sizing: border-box;
  }

  .combo .caret {
    margin-right: 1px;
  }

  .spin {
    width: calc(100% - 2px);
    height: 22px;
    box-sizing: border-box;
    border: 1px solid #707070;
    display: flex;
    align-items: center;
    justify-content: flex-end;
    color: #808080;
    padding-right: 3px;
    gap: 10px;
    font-size: 13px;
  }

  .arrows {
    display: flex;
    flex-direction: column;
    gap: 6px;
  }

  .arrows i {
    width: 0;
    height: 0;
    border-left: 3px solid transparent;
    border-right: 3px solid transparent;
  }

  .arrows .up {
    border-bottom: 3px solid #606060;
  }

  .arrows .dn {
    border-top: 3px solid #606060;
  }

  .check {
    width: 11px;
    height: 11px;
    border: 1px solid #808080;
    background: #f6f6f6;
  }

  /* work area */
  .work {
    flex: none;
    height: 625px;
    display: flex;
  }

  .side {
    width: 165px;
    flex: none;
    margin-top: 2px;
    display: flex;
    flex-direction: column;
  }

  .sidehead {
    height: 16px;
    background: #0a55d8;
    color: #fff;
    display: flex;
    align-items: center;
    flex: none;
    margin-bottom: 1px;
  }

  .sidehead span {
    letter-spacing: 0.5px;
    width: 134px;
    font-size: 12px;
  }

  .sidehead svg {
    margin-right: 8px;
  }

  .sidebtn {
    height: 21px;
    box-sizing: border-box;
    border: 1px solid #a0a0a0;
    text-align: center;
    line-height: 19px;
    background: #f0f0f0;
    margin-bottom: 1px;
    flex: none;
  }

  .sidebtn.low {
    margin-top: 2px;
  }

  .treetools {
    height: 28px;
    margin-left: 1px;
    border: 1px solid #d0d0d0;
    border-bottom: 0;
    box-sizing: border-box;
    display: flex;
    align-items: center;
    padding-left: 5px;
    gap: 7px;
    flex: none;
  }

  .treeframe {
    height: 486px;
    box-sizing: border-box;
    border: 1px solid #8a8a8a;
    border-top: 0;
    margin-left: 2px;
    width: 161px;
    display: flex;
    background: #fff;
    overflow: hidden;
    flex: none;
  }

  .treerows {
    width: 143px;
    flex: none;
    overflow: hidden;
    height: 100%;
    padding-top: 2px;
    box-sizing: border-box;
  }

  .node {
    height: 16px;
    position: relative;
    display: flex;
    align-items: center;
    white-space: nowrap;
    line-height: 16px;
  }

  .folderrow {
    padding-left: 23px;
  }

  .folderrow .chev {
    position: absolute;
    left: 7px;
    top: 3px;
  }

  .folderrow .fold {
    flex: none;
  }

  .folderrow .nm {
    margin-left: 5px;
  }

  .folderrow::before {
    content: "";
    position: absolute;
    left: 16px;
    top: 8px;
    width: 7px;
    border-top: 1px dotted #808080;
  }

  /* dotted tree connectors drawn behind each leaf */
  .leaf {
    padding-left: 43px;
    background-color: #fff;
    background-image: linear-gradient(#808080 50%, transparent 50%), linear-gradient(90deg, #808080 50%, transparent 50%);
    background-size: 1px 2px, 2px 1px;
    background-repeat: repeat-y, repeat-x;
    background-position: 31px 0, 0 8px;
  }

  .leaf::before {
    content: "";
    position: absolute;
    left: 0;
    top: 8px;
    width: 31px;
    height: 1px;
    background: #fff;
  }

  .leaf::after {
    content: "";
    position: absolute;
    left: 12px;
    top: 0;
    bottom: 0;
    border-left: 1px dotted #808080;
  }

  .leaf .ico,
  .leaf .nm {
    position: relative;
    z-index: 1;
  }

  .leaf .ico {
    background: #fff;
  }

  .leaf .nm {
    margin-left: 5px;
  }

  .nm {
    background: #fff;
    padding-right: 2px;
  }

  .nm em {
    font-family: "Liberation Mono", monospace;
    font-style: normal;
    font-size: 10px;
  }

  .leaf.cur .ico {
    background: #cdcdcd;
    box-shadow: -3px 0 0 #cdcdcd;
  }

  .leaf.cur .nm {
    background: #cdcdcd;
    margin-left: 0;
    padding-left: 5px;
  }

  .mini {
    flex: none;
  }

  .newtag {
    background: #f8e050;
    width: 22px;
    height: 12px;
    margin-left: 2px;
  }

  .folderrow .mini {
    margin-left: 27px;
  }

  .scroll {
    width: 16px;
    flex: none;
    background: #f0f0f0;
    display: flex;
    flex-direction: column;
    height: 100%;
  }

  .thumbtrack {
    flex: 1;
    padding: 28px 0 14px;
    box-sizing: border-box;
    min-height: 0;
  }

  .thumb {
    height: 100%;
    background: #cdcdcd;
  }

  /* canvas */
  .center {
    width: 1196px;
    margin-left: 5px;
    flex: none;
    display: flex;
    flex-direction: column;
  }

  .canvas {
    display: block;
    background: #000;
    flex: none;
  }

  .bubble {
    fill: #d0d0d0;
    font-family: "Liberation Sans", sans-serif;
    font-size: 14px;
  }

  /* status */
  .status {
    height: 20px;
    flex: none;
    display: flex;
    gap: 2px;
    background: #f8f8f8;
    border-top: 1px solid #c4d0dc;
    box-sizing: border-box;
    line-height: 18px;
    white-space: nowrap;
  }

  .cell {
    border-right: 1px solid #d8d8d8;
    padding-left: 2px;
    box-sizing: border-box;
    flex: none;
  }

  .cell em {
    font-family: "Liberation Mono", monospace;
    font-style: normal;
    font-size: 10px;
  }

  .s1 {
    width: 149px;
  }

  .s2 {
    width: 79px;
  }

  .s3 {
    width: 97px;
  }

  .s4 {
    width: 48px;
  }

  .s5 {
    flex: 1;
  }

  /* sogou bar sits over the status line */
  .ime {
    position: absolute;
    left: 1160px;
    top: 703px;
    display: flex;
    align-items: center;
    height: 25px;
    gap: 7px;
  }

  .imezh {
    color: #1a78d0;
    font-size: 15px;
    font-family: "Noto Sans CJK SC", sans-serif;
    margin-left: 2px;
  }

  .imedot {
    color: #1a78d0;
    font-size: 14px;
    width: 14px;
  }

  /* taskbar */
  .taskbar {
    height: 41px;
    flex: none;
    background: #010a10;
    display: flex;
    color: #fff;
    position: relative;
  }

  .start {
    width: 48px;
    background: #000;
    display: flex;
    align-items: center;
    justify-content: center;
    flex: none;
  }

  .search {
    width: 340px;
    background: #333;
    color: #9a9a9a;
    display: flex;
    align-items: center;
    padding-left: 10px;
    box-sizing: border-box;
    font-size: 14px;
    flex: none;
  }

  .search span {
    margin-left: 6px;
    width: 281px;
  }

  .apps {
    display: flex;
    margin-left: 3px;
    flex: none;
    width: 499px;
  }

  .app {
    width: 49.9px;
    display: flex;
    align-items: center;
    justify-content: center;
    box-sizing: border-box;
    position: relative;
  }

  .app.active {
    background: #2e3c46;
  }

  .app.run::after,
  .app.active::after {
    content: "";
    position: absolute;
    left: 4px;
    right: 4px;
    bottom: 0;
    height: 2px;
    background: #76b9ed;
  }

  .app.active::after {
    left: 0;
    right: 0;
  }

  .tray {
    display: flex;
    align-items: center;
    position: relative;
    flex: 1;
    font-size: 12px;
  }

  .link {
    margin-left: 59px;
  }

  .cpu,
  .clock {
    display: flex;
    flex-direction: column;
    align-items: center;
    line-height: 17px;
    text-align: center;
  }

  .cpu {
    margin-left: 17px;
    width: 50px;
  }

  .tup {
    margin-left: 17px;
  }

  .tbat {
    margin-left: 10px;
  }

  .twifi {
    margin-left: 7px;
  }

  .tvol {
    margin-left: 5px;
  }

  .tkey {
    margin-left: 9px;
  }

  .tzh {
    margin-left: 10px;
    font-size: 13px;
  }

  .ts {
    margin-left: 13px;
  }

  .clock {
    margin-left: 15px;
    width: 62px;
  }

  .tnote {
    margin-left: 18px;
  }
</style>
